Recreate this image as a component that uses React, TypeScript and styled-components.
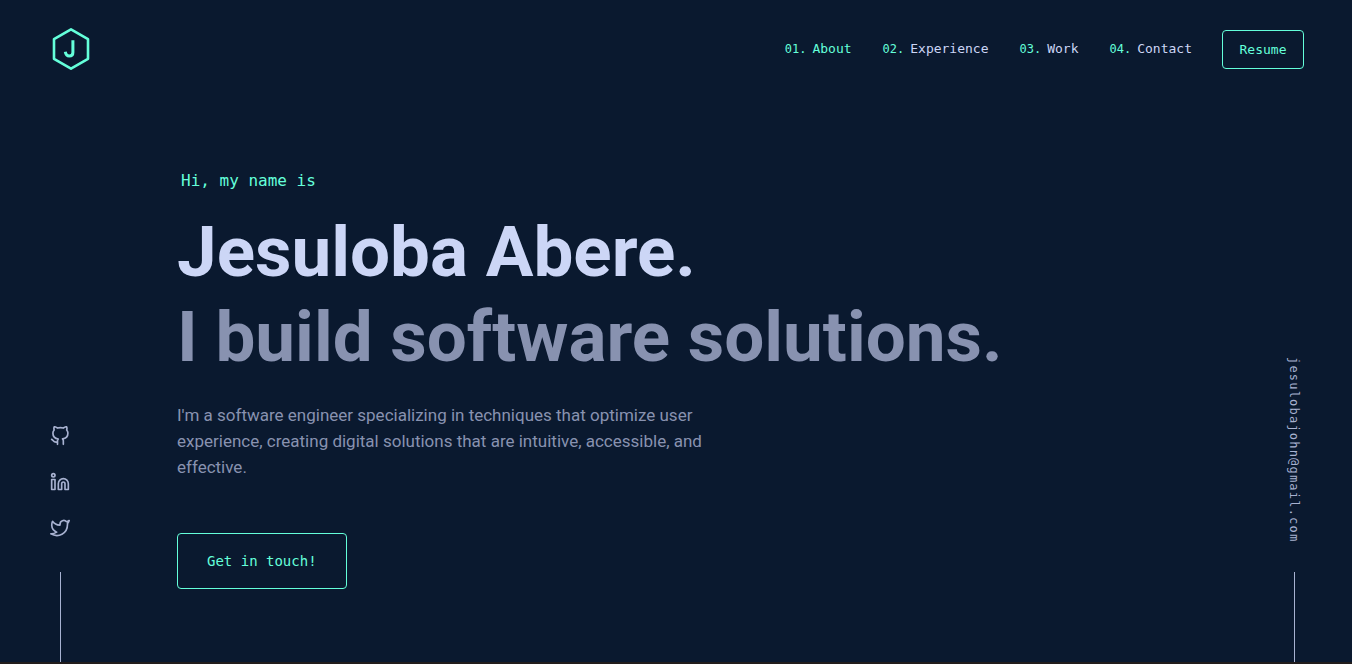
import React from "react";
import styled, { createGlobalStyle } from "styled-components";

const green = "#64ffda";
const slate = "#8892b0";
const lightSlate = "#a8b2d1";
const lightestSlate = "#ccd6f6";
const mono = `"DejaVu Sans Mono", "Liberation Mono", monospace`;
const sans = `Roboto, "Liberation Sans", sans-serif`;

const GlobalStyle = createGlobalStyle`
  *, *::before, *::after { box-sizing: border-box; }
  body { margin: 0; background: #0a192f; color: ${slate}; font-family: ${sans}; }
  h1, h2, p, ol, ul { margin: 0; padding: 0; }
  ol, ul { list-style: none; }
  a { color: inherit; text-decoration: none; }
`;

const Page = styled.div`
  min-height: 100vh;
  display: flex;
  flex-direction: column;
  border-bottom: 2px solid #221d1c;
`;

const Header = styled.header`
  display: flex;
  align-items: center;
  justify-content: space-between;
  padding: 28px 48px 28px 50px;
`;

const LogoLink = styled.a`
  display: flex;
  color: ${green};
`;

const Nav = styled.nav`
  display: flex;
  align-items: center;
  gap: 30px;
  font-family: ${mono};
  font-size: 13px;
`;

const NavList = styled.ol`
  display: flex;
  gap: 31px;
  padding-bottom: 2px;
`;

const NavLink = styled.a<{ $active?: boolean }>`
  display: flex;
  align-items: baseline;
  gap: 6px;
  color: ${(p) => (p.$active ? green : lightestSlate)};
`;

const NavNumber = styled.span`
  color: ${green};
  font-size: 12px;
`;

const OutlineButton = styled.button<{ $large?: boolean }>`
  display: block;
  min-width: 82px;
  padding: ${(p) => (p.$large ? "18px 29px" : "11px 16px")};
  border: 1px solid ${green};
  border-radius: 4px;
  background: transparent;
  color: ${green};
  font-family: ${mono};
  font-size: ${(p) => (p.$large ? "14px" : "13px")};
  line-height: ${(p) => (p.$large ? "18px" : "15px")};
  cursor: pointer;
`;

const Body = styled.div`
  flex: 1;
  display: flex;
  padding: 0 38px 0 40px;
`;

const Rail = styled.aside`
  flex: none;
  width: 40px;
  align-self: flex-end;
  display: flex;
  flex-direction: column;
  align-items: center;

  &::after {
    content: "";
    width: 1px;
    height: 90px;
    background: ${lightSlate};
  }
`;

const SocialList = styled.ul`
  display: flex;
  flex-direction: column;
  gap: 26px;
  margin-bottom: 34px;
`;

const SocialLink = styled.a`
  display: flex;
  color: ${lightSlate};
`;

const EmailLink = styled.a`
  margin-bottom: 30px;
  color: ${lightSlate};
  font-family: ${mono};
  font-size: 12px;
  line-height: 20px;
  letter-spacing: 0.1em;
  writing-mode: vertical-rl;
`;

const Main = styled.main`
  flex: 1;
  max-width: 1000px;
  margin: 0 auto;
  padding: 73px 0;
`;

const Greeting = styled.p`
  margin: 0 0 18px 4px;
  color: ${green};
  font-family: ${mono};
  font-size: 16px;
  line-height: 20px;
`;

const Name = styled.h1`
  color: ${lightestSlate};
  font-size: 71px;
  font-weight: 700;
  line-height: 85px;
`;

const Tagline = styled.h2`
  font-size: 71px;
  font-weight: 700;
  line-height: 85px;
`;

const Intro = styled.p`
  max-width: 540px;
  margin: 23px 0 53px;
  font-size: 17px;
  line-height: 26px;
`;

const Icon = ({ children }: { children: React.ReactNode }) => (
  <svg
    width="20"
    height="20"
    viewBox="0 0 24 24"
    fill="none"
    stroke="currentColor"
    strokeWidth="2"
    strokeLinecap="round"
    strokeLinejoin="round"
    aria-hidden="true"
  >
    {children}
  </svg>
);

const Logo = () => (
  <svg width="42" height="42" viewBox="0 0 42 42" fill="none" stroke="currentColor" aria-hidden="true">
    <path d="M21 1.4 38 11.2V30.8L21 40.6 4 30.8V11.2Z" strokeWidth="2.6" strokeLinejoin="round" />
    <path d="M22.9 12.2V24.4C22.9 26.9 21.6 28 19.3 28S15.7 26.7 15.3 23.8" strokeWidth="3" />
  </svg>
);

const navItems = ["About", "Experience", "Work", "Contact"];

const socials = [
  {
    label: "GitHub",
    icon: (
      <path d="M9 19c-5 1.5-5-2.5-7-3m14 6v-3.87a3.37 3.37 0 0 0-.94-2.61c3.14-.35 6.44-1.54 6.44-7A5.44 5.44 0 0 0 20 4.77 5.07 5.07 0 0 0 19.91 1S18.73.65 16 2.48a13.38 13.38 0 0 0-7 0C6.27.65 5.09 1 5.09 1A5.07 5.07 0 0 0 5 4.77a5.44 5.44 0 0 0-1.5 3.78c0 5.42 3.3 6.61 6.44 7A3.37 3.37 0 0 0 9 18.13V22" />
    ),
  },
  {
    label: "LinkedIn",
    icon: (
      <>
        <path d="M16 8a6 6 0 0 1 6 6v7h-4v-7a2 2 0 0 0-4 0v7h-4v-7a6 6 0 0 1 6-6z" />
        <rect x="2" y="9" width="4" height="12" />
        <circle cx="4" cy="4" r="2" />
      </>
    ),
  },
  {
    label: "Twitter",
    icon: (
      <path d="M23 3a10.9 10.9 0 0 1-3.14 1.53 4.48 4.48 0 0 0-7.86 3v1A10.66 10.66 0 0 1 3 4s-4 9 5 13a11.64 11.64 0 0 1-7 2c9 5 20 0 20-11.5a4.5 4.5 0 0 0-.08-.83A7.72 7.72 0 0 0 23 3z" />
    ),
  },
];

export default function App() {
  return (
    <>
      <GlobalStyle />
      <Page>
        <Header>
          <LogoLink href="#home" aria-label="Home">
            <Logo />
          </LogoLink>
          <Nav>
            <NavList>
              {navItems.map((item, i) => (
                <li key={item}>
                  <NavLink href={`#${item.toLowerCase()}`} $active={i === 0}>
                    <NavNumber>{`0${i + 1}.`}</NavNumber>
                    {item}
                  </NavLink>
                </li>
              ))}
            </NavList>
            <OutlineButton type="button">Resume</OutlineButton>
          </Nav>
        </Header>
        <Body>
          <Rail>
            <SocialList>
              {socials.map(({ label, icon }) => (
                <li key={label}>
                  <SocialLink href={`#${label.toLowerCase()}`} aria-label={label}>
                    <Icon>{icon}</Icon>
                  </SocialLink>
                </li>
              ))}
            </SocialList>
          </Rail>
          <Main>
            <Greeting>Hi, my name is</Greeting>
            <Name>Jesuloba Abere.</Name>
            <Tagline>I build software solutions.</Tagline>
            <Intro>
              I'm a software engineer specializing in techniques that optimize user experience,
              creating digital solutions that are intuitive, accessible, and effective.
            </Intro>
            <OutlineButton type="button" $large>
              Get in touch!
            </OutlineButton>
          </Main>
          <Rail>
            <EmailLink href="mailto:jesulobajohn@gmail.com">jesulobajohn@gmail.com</EmailLink>
          </Rail>
        </Body>
      </Page>
    </>
  );
}
